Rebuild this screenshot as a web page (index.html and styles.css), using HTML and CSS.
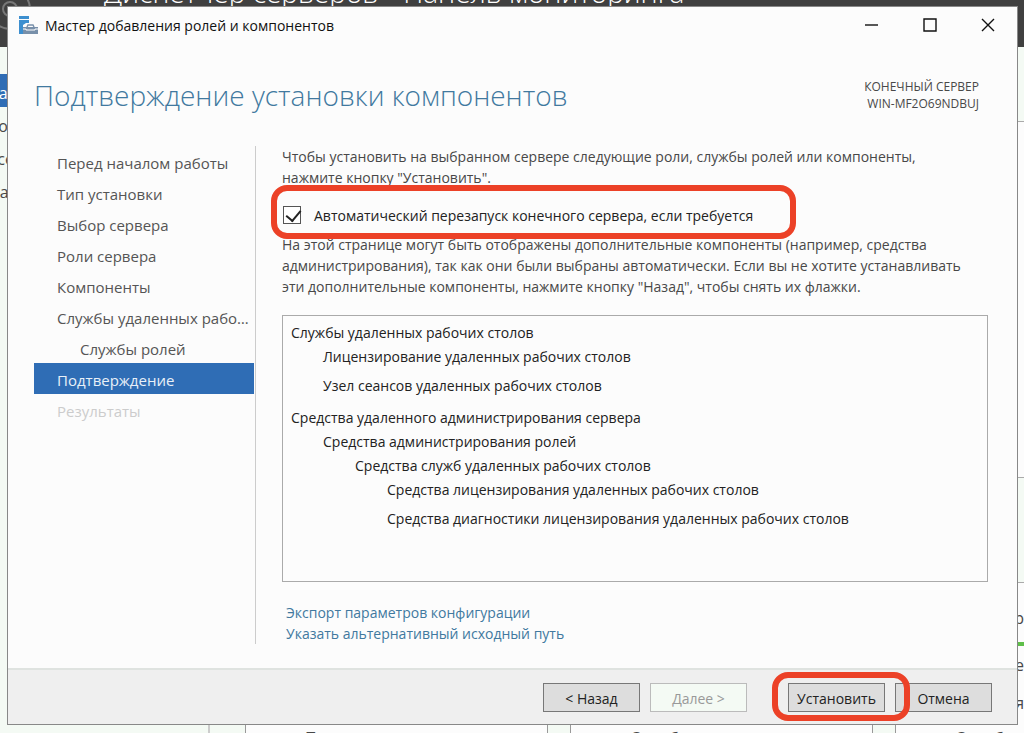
FILE: index.html
```html
<!DOCTYPE html>
<html lang="ru">
<head>
    <meta charset="UTF-8">
    <meta name="viewport" content="width=device-width, initial-scale=1.0">
    <title>Мастер добавления ролей и компонентов</title>
    <link rel="stylesheet" href="styles.css">
</head>
<body>
    <!-- Server manager window behind the wizard -->
    <div class="manager" aria-hidden="true">
        <div class="manager-header">
            <svg class="manager-back" width="52" height="40" viewBox="0 0 52 40" fill="none" stroke="#777" stroke-width="2">
                <circle cx="10" cy="17" r="20"/>
                <circle cx="10" cy="17" r="7"/>
                <path d="M38 20h12"/>
            </svg>
            <span class="manager-title">Диспетчер серверов ‣ Панель мониторинга</span>
        </div>
        <div class="manager-body">
            <div class="manager-nav">
                <div class="manager-link selected">Панель мониторинга</div>
                <div class="manager-link">Локальный сервер</div>
                <div class="manager-link">Все серверы</div>
                <div class="manager-link">Файловые службы</div>
            </div>
            <div class="manager-main">
                <div class="manager-welcome"></div>
                <div class="manager-tiles">
                    <div class="tile"><span>Производительность</span></div>
                    <div class="tile"><span>Службы</span></div>
                    <div class="tile"><span>Службы</span></div>
                </div>
            </div>
        </div>
        <div class="manager-edge">
            <p class="edge-role">р</p>
            <p>не</p>
            <p>я</p>
        </div>
    </div>

    <div class="wizard">
        <div class="titlebar">
            <svg class="app-icon" width="20" height="20" viewBox="0 0 20 20">
                <path d="M0 1h10v3H0zM0 5h10v3H7L4 10v9H0z" fill="#3d8fcf"/>
                <path d="M4 12h15v7H4z" fill="#7890aa"/>
                <path d="M8 12l1-2h5l1 2" fill="none" stroke="#7890aa" stroke-width="1.5"/>
                <path d="M4 14h3v1h9v-1h3" fill="none" stroke="#fff"/>
            </svg>
            <span class="caption">Мастер добавления ролей и компонентов</span>
            <div class="window-buttons">
                <button aria-label="Свернуть"><svg width="16" height="16" viewBox="0 0 16 16"><path d="M1 8h13"/></svg></button>
                <button aria-label="Развернуть"><svg width="16" height="16" viewBox="0 0 16 16"><path d="M2 2h12v12H2z"/></svg></button>
                <button aria-label="Закрыть"><svg width="16" height="16" viewBox="0 0 16 16"><path d="M2 2l12 12M14 2L2 14"/></svg></button>
            </div>
        </div>

        <div class="heading">
            <h1>Подтверждение установки компонентов</h1>
            <div class="target">
                <div>КОНЕЧНЫЙ СЕРВЕР</div>
                <div>WIN-MF2O69NDBUJ</div>
            </div>
        </div>

        <div class="content">
            <nav class="steps">
                <a href="#">Перед началом работы</a>
                <a href="#">Тип установки</a>
                <a href="#">Выбор сервера</a>
                <a href="#">Роли сервера</a>
                <a href="#">Компоненты</a>
                <a href="#">Службы удаленных рабочих столов</a>
                <a href="#" class="sub">Службы ролей</a>
                <a href="#" class="active">Подтверждение</a>
                <a class="disabled">Результаты</a>
            </nav>

            <div class="page">
                <p>Чтобы установить на выбранном сервере следующие роли, службы ролей или компоненты,<br>нажмите кнопку "Установить".</p>
                <div class="restart">
                    <input type="checkbox" id="restart" checked>
                    <label for="restart">Автоматический перезапуск конечного сервера, если требуется</label>
                    <span class="mark"></span>
                </div>
                <p>На этой странице могут быть отображены дополнительные компоненты (например, средства<br>администрирования), так как они были выбраны автоматически. Если вы не хотите устанавливать<br>эти дополнительные компоненты, нажмите кнопку "Назад", чтобы снять их флажки.</p>

                <div class="selection">
                    <ul>
                        <li>Службы удаленных рабочих столов
                            <ul>
                                <li>Лицензирование удаленных рабочих столов</li>
                                <li>Узел сеансов удаленных рабочих столов</li>
                            </ul>
                        </li>
                        <li>Средства удаленного администрирования сервера
                            <ul>
                                <li>Средства администрирования ролей
                                    <ul>
                                        <li>Средства служб удаленных рабочих столов
                                            <ul>
                                                <li>Средства лицензирования удаленных рабочих столов</li>
                                                <li>Средства диагностики лицензирования удаленных рабочих столов</li>
                                            </ul>
                                        </li>
                                    </ul>
                                </li>
                            </ul>
                        </li>
                    </ul>
                </div>

                <div class="links">
                    <a href="#">Экспорт параметров конфигурации</a>
                    <a href="#">Указать альтернативный исходный путь</a>
                </div>
            </div>
        </div>

        <div class="footer">
            <button class="btn">&lt; Назад</button>
            <button class="btn" disabled>Далее &gt;</button>
            <div class="install">
                <button class="btn">Установить</button>
                <span class="mark"></span>
            </div>
            <button class="btn">Отмена</button>
        </div>
    </div>
</body>
</html>
```
FILE: styles.css
```css
* {
    box-sizing: border-box;
}
body {
    margin: 0;
    height: 100vh;
    padding: 6px 6px 8px 7px;
    overflow: hidden;
    font-family: "Open Sans", "Noto Sans", sans-serif;
    font-size: 14px;
    font-weight: 500;
    line-height: 21px;
    color: #484848;
}
p, h1, ul {
    margin: 0;
    padding: 0;
}
button {
    font: inherit;
}

/* Server manager behind */
.manager {
    position: absolute;
    inset: 0;
    display: flex;
    flex-direction: column;
    overflow: hidden;
    background: #f4faf4;
    font-size: 16px;
    font-weight: 400;
}
.manager-header {
    position: relative;
    height: 47px;
    background: #404040;
    color: #fff;
}
.manager-back {
    position: absolute;
    top: -8px;
    left: 0;
}
.manager-title {
    position: absolute;
    top: -28px;
    left: 104px;
    font-size: 28px;
    line-height: 40px;
    font-weight: 300;
    white-space: nowrap;
}
.manager-body {
    display: flex;
    flex: 1;
    min-height: 0;
}
.manager-nav {
    flex: none;
    width: 210px;
    padding-top: 27px;
    border-right: 2px solid #ccc;
}
.manager-link {
    height: 33px;
    margin-left: -13px;
    line-height: 38px;
    white-space: nowrap;
}
.manager-link.selected {
    background: #2f6db5;
    color: #fff;
}
.manager-main {
    display: flex;
    flex: 1;
    flex-direction: column;
    min-width: 0;
    padding-top: 74px;
}
.manager-welcome {
    flex: 1;
    margin-bottom: 104px;
    background: #fcfcfc;
    border: solid #aaa;
    border-width: 1px 0;
}
.manager-tiles {
    display: flex;
    gap: 22px;
    height: 151px;
    margin-left: 35px;
}
.tile {
    display: flex;
    align-items: flex-end;
    flex: none;
    width: 303px;
    height: 168px;
    padding-left: 59px;
    border: 1px solid #999;
    background: #fcfcfc;
}
.manager-edge {
    position: absolute;
    right: 0;
    bottom: 0;
    width: 10px;
    height: 151px;
    border-top: 1px solid #aaa;
    background: #fcfcfc;
    line-height: 38px;
    direction: rtl;
}
.manager-edge .edge-role {
    height: 63px;
    padding-top: 16px;
    border-bottom: 4px solid #5fbf4a;
}

/* Wizard window */
.wizard {
    position: relative;
    display: flex;
    flex-direction: column;
    height: 100%;
    border: 1px solid #888;
    background: #fcfcfc;
}
.titlebar {
    display: flex;
    align-items: center;
    height: 36px;
    padding-left: 11px;
    color: #111;
}
.caption {
    flex: 1;
    margin-left: 6px;
}
.window-buttons {
    display: flex;
}
.window-buttons button {
    width: 58px;
    height: 34px;
    padding: 0;
    border: none;
    background: none;
}
.window-buttons svg {
    display: block;
    margin: auto;
    fill: none;
    stroke: #111;
    stroke-width: 1.4;
}
.heading {
    display: flex;
    justify-content: space-between;
    align-items: center;
    height: 103px;
    padding: 0 38px 0 26px;
}
h1 {
    font-size: 28px;
    line-height: 40px;
    font-weight: 300;
    color: #41799f;
}
.target {
    font-size: 12px;
    line-height: 17px;
    text-align: right;
}
.content {
    display: flex;
    flex: 1;
    padding: 0 29px 24px 26px;
}
.steps {
    width: 222px;
    flex: none;
    border-right: 1px solid #ccc;
    padding-right: 1px;
}
.steps a {
    display: block;
    padding: 3px 0 0 23px;
    overflow: hidden;
    color: #555;
    font-size: 15px;
    font-weight: 400;
    line-height: 28px;
    text-decoration: none;
    text-overflow: ellipsis;
    white-space: nowrap;
}
.steps .sub {
    padding-left: 46px;
}
.steps .active {
    background: #2f6db5;
    color: #e8f0f8;
}
.steps .disabled {
    color: #ccc;
}
.page {
    display: flex;
    flex: 1;
    flex-direction: column;
    min-width: 0;
    padding-left: 26px;
    white-space: nowrap;
}
.restart {
    position: relative;
    display: flex;
    align-items: center;
    height: 46px;
    padding-top: 8px;
    color: #222;
}
.restart input {
    appearance: none;
    width: 18px;
    height: 18px;
    margin: 0 13px 0 1px;
    border: 1px solid #555;
    background: #fff;
}
.restart input:checked::before {
    content: "";
    display: block;
    width: 7px;
    height: 12px;
    margin: 0 0 0 5px;
    border: solid #222;
    border-width: 0 2px 2px 0;
    transform: rotate(40deg);
}
.mark {
    position: absolute;
    border: 6px solid #ec4127;
    border-radius: 16px;
    pointer-events: none;
}
.restart .mark {
    top: -3px;
    left: -11px;
    width: 525px;
    height: 54px;
}
.selection {
    flex: 1;
    margin-top: 18px;
    padding: 5px 8px;
    border: 1px solid #aaa;
    color: #222;
    line-height: 24px;
}
.selection ul {
    list-style: none;
}
.selection ul ul {
    padding-left: 32px;
}
.selection li + li {
    margin-top: 5px;
}
.selection > ul > li + li {
    margin-top: 8px;
}
.links {
    display: flex;
    flex-direction: column;
    align-items: flex-start;
    padding: 20px 0 0 4px;
}
.links a {
    color: #41799f;
    text-decoration: none;
}
.footer {
    display: flex;
    justify-content: flex-end;
    align-items: center;
    gap: 10px;
    height: 56px;
    padding-right: 25px;
    border-top: 2px solid #dfe3e0;
    background: #efefef;
}
.btn {
    width: 97px;
    height: 29px;
    padding: 2px 0 0;
    border: 1px solid #777;
    background: #ddd;
    color: #222;
}
.btn:disabled {
    border-color: #bbb;
    background: #f4faf4;
    color: #999;
}
.install {
    position: relative;
    margin-left: 31px;
}
.install .mark {
    top: -11px;
    left: -16px;
    width: 138px;
    height: 49px;
}
```
